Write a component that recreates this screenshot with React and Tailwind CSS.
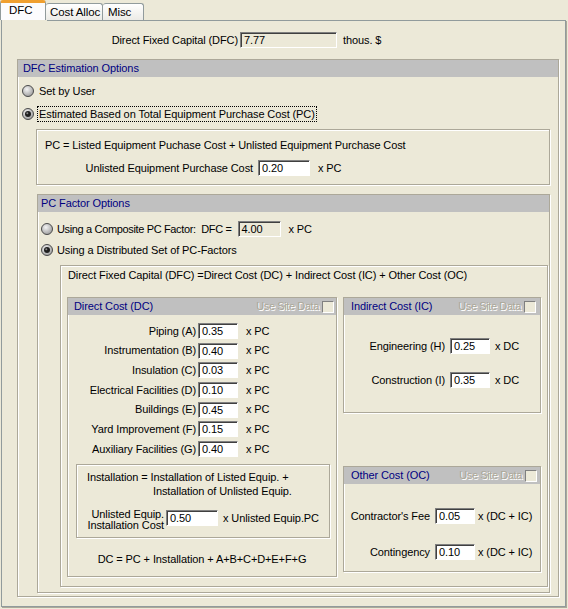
import React from "react";

const etched = "border border-[#aca899] shadow-[inset_1px_1px_0_#ffffff,1px_1px_0_#ffffff]";

function Radio({ checked }) {
  return (
    <svg width="12" height="12" viewBox="0 0 12 12" className="shrink-0">
      <defs>
        <radialGradient id={checked ? "rg1" : "rg0"} cx="0.4" cy="0.35" r="0.7">
          <stop offset="0" stopColor="#f4f4f4" />
          <stop offset="1" stopColor="#9a9a9a" />
        </radialGradient>
      </defs>
      <circle cx="6" cy="6" r="5.5" fill={`url(#${checked ? "rg1" : "rg0"})`} stroke="#4b4b4b" />
      {checked && <circle cx="6" cy="6" r="3" fill="#1e1e1e" />}
      {checked && <circle cx="5.3" cy="5.2" r="1" fill="#8a8a8a" />}
    </svg>
  );
}

function Field({ value, w = "w-[40px]", disabled = false }) {
  return (
    <div
      className={`${w} h-[16px] shrink-0 border border-t-[#808080] border-l-[#808080] border-b-white border-r-white shadow-[inset_1px_1px_0_#404040] pl-[3px] leading-[14px] ${
        disabled ? "bg-[#ece9d8]" : "bg-white"
      }`}
    >
      {value}
    </div>
  );
}

function SiteData() {
  return (
    <div className="flex items-center">
      <span className="text-[#aca899] [text-shadow:1px_1px_0_#ffffff] tracking-[-0.4px]">Use Site Data</span>
      <div className="ml-[3px] w-[12px] h-[12px] border border-t-[#808080] border-l-[#808080] border-b-white border-r-white bg-[#ece9d8]" />
    </div>
  );
}

function Header({ title, pl, site, pr }) {
  return (
    <div className={`h-[17px] bg-[#c0c0c0] flex items-center justify-between ${pl} ${pr}`}>
      <span className="text-[#000080]">{title}</span>
      {site && <SiteData />}
    </div>
  );
}

const directRows = [
  ["Piping (A)", "0.35"],
  ["Instrumentation (B)", "0.40"],
  ["Insulation (C)", "0.03"],
  ["Electrical Facilities (D)", "0.10"],
  ["Buildings (E)", "0.45"],
  ["Yard Improvement (F)", "0.15"],
  ["Auxiliary Facilities (G)", "0.40"],
];

export default function App() {
  return (
    <div className="w-[568px] h-[609px] bg-[#ece9d8] overflow-hidden whitespace-nowrap text-[11px] text-black tracking-[-0.1px] font-['Liberation_Sans',Arial,sans-serif]">
      {/* tabs */}
      <div className="flex items-end h-[20px]">
        <div className="w-[46px] h-[20px] bg-[#fcfcfe] border-x border-[#919b9c] border-t-[3px] border-t-[#f0a030] rounded-t-[3px] text-[11.5px] pl-[8px] leading-[15px]">
          DFC
        </div>
        <div className="w-[57px] h-[17px] bg-gradient-to-b from-white to-[#ecebe6] border-r border-t border-[#919b9c] rounded-t-[3px] pl-[4px] leading-[17px] text-[11.5px]">
          Cost Alloc
        </div>
        <div className="w-[41px] h-[17px] bg-gradient-to-b from-white to-[#ecebe6] border-r border-t border-[#919b9c] rounded-t-[3px] pl-[5px] leading-[17px] text-[11.5px]">
          Misc
        </div>
      </div>

      {/* page */}
      <div className="ml-[1px] w-[565px] h-[587px] border border-t-0 border-[#919b9c] shadow-[1px_1px_0_#aca899] relative">
        <div className="absolute left-[45px] right-0 top-0 border-t border-[#919b9c]" />
        <div className="pt-[12px]">
          <div className="flex items-center h-[16px]">
            <span className="w-[236px] text-right">Direct Fixed Capital (DFC)</span>
            <div className="ml-[2px]">
              <Field value="7.77" w="w-[97px]" disabled />
            </div>
            <span className="ml-[6px]">thous. $</span>
          </div>

          {/* DFC Estimation Options */}
          <div className={`mt-[11px] ml-[15px] w-[542px] h-[538px] ${etched}`}>
            <Header title="DFC Estimation Options" pl="pl-[5px]" />
            <div className="mt-[6px] h-[16px] flex items-center pl-[4px]">
              <Radio />
              <span className="ml-[5px]">Set by User</span>
            </div>
            <div className="mt-[7px] h-[16px] flex items-center pl-[4px]">
              <Radio checked />
              <span className="ml-[3px] px-[1px] border border-dotted border-black leading-[14px]">
                Estimated Based on Total Equipment Purchase Cost (PC)
              </span>
            </div>

            <div className={`mt-[7px] ml-[18px] w-[514px] h-[56px] ${etched}`}>
              <div className="mt-[8px] pl-[8px] leading-[14px]">
                PC = Listed Equipment Puchase Cost + Unlisted Equipment Purchase Cost
              </div>
              <div className="mt-[8px] h-[16px] flex items-center">
                <span className="w-[216px] text-right">Unlisted Equipment Purchase Cost</span>
                <div className="ml-[5px]">
                  <Field value="0.20" w="w-[52px]" />
                </div>
                <span className="ml-[8px]">x PC</span>
              </div>
            </div>

            {/* PC Factor Options */}
            <div className={`mt-[9px] ml-[19px] w-[513px] h-[399px] ${etched}`}>
              <Header title="PC Factor Options" pl="pl-[3px]" />
              <div className="mt-[9px] h-[16px] flex items-center pl-[3px]">
                <Radio />
                <span className="ml-[4px] tracking-[-0.35px]">Using a Composite PC Factor:&nbsp; DFC =</span>
                <div className="ml-[6px]">
                  <Field value="4.00" w="w-[43px]" disabled />
                </div>
                <span className="ml-[8px]">x PC</span>
              </div>
              <div className="mt-[5px] h-[16px] flex items-center pl-[3px]">
                <Radio checked />
                <span className="ml-[4px]">Using a Distributed Set of PC-Factors</span>
              </div>

              {/* Distributed */}
              <div className={`mt-[7px] ml-[22px] w-[488px] h-[322px] ${etched}`}>
                <div className="mt-[2px] pl-[7px] leading-[14px]">
                  Direct Fixed Capital (DFC) =Direct Cost (DC) + Indirect Cost (IC) + Other Cost (OC)
                </div>
                <div className="mt-[15px] pl-[6px] flex items-start">
                  {/* Direct Cost */}
                  <div className={`w-[270px] h-[280px] ${etched}`}>
                    <Header title="Direct Cost (DC)" pl="pl-[6px]" pr="pr-[2px]" site />
                    <div className="mt-[8px] flex flex-col gap-[3.67px]">
                      {directRows.map(([label, v]) => (
                        <div key={label} className="h-[16px] flex items-center">
                          <span className="w-[128px] text-right">{label}</span>
                          <div className="ml-[2px]">
                            <Field value={v} />
                          </div>
                          <span className="ml-[8px]">x PC</span>
                        </div>
                      ))}
                    </div>
                    <div className={`mt-[7px] ml-[8px] w-[254px] h-[74px] ${etched}`}>
                      <div className="mt-[5px] pl-[10px] leading-[14px]">
                        Installation = Installation of Listed Equip. +
                      </div>
                      <div className="pl-[76px] leading-[14px]">Installation of Unlisted Equip.</div>
                      <div className="mt-[12px] flex items-start">
                        <div className="w-[87px] text-right leading-[11.5px] -mt-[1px]">
                          <div>Unlisted Equip.</div>
                          <div>Installation Cost</div>
                        </div>
                        <div className="ml-[2px]">
                          <Field value="0.50" w="w-[52px]" />
                        </div>
                        <span className="ml-[5px] leading-[16px]">x Unlisted Equip.PC</span>
                      </div>
                    </div>
                    <div className="mt-[14px] leading-[14px] text-center">
                      DC = PC + Installation + A+B+C+D+E+F+G
                    </div>
                  </div>

                  {/* right column */}
                  <div className="ml-[6px] w-[198px]">
                    <div className={`h-[116px] ${etched}`}>
                      <Header title="Indirect Cost (IC)" pl="pl-[7px]" pr="pr-[4px]" site />
                      <div className="mt-[23px] h-[16px] flex items-center">
                        <span className="w-[101px] text-right">Engineering (H)</span>
                        <div className="ml-[5px]">
                          <Field value="0.25" />
                        </div>
                        <span className="ml-[5px]">x DC</span>
                      </div>
                      <div className="mt-[18px] h-[16px] flex items-center">
                        <span className="w-[101px] text-right">Construction (I)</span>
                        <div className="ml-[5px]">
                          <Field value="0.35" />
                        </div>
                        <span className="ml-[5px]">x DC</span>
                      </div>
                    </div>

                    <div className={`mt-[53px] h-[106px] ${etched}`}>
                      <Header title="Other Cost (OC)" pl="pl-[7px]" pr="pr-[3px]" site />
                      <div className="mt-[24px] h-[16px] flex items-center">
                        <span className="w-[86px] text-right">Contractor's Fee</span>
                        <div className="ml-[5px]">
                          <Field value="0.05" />
                        </div>
                        <span className="ml-[3px]">x (DC + IC)</span>
                      </div>
                      <div className="mt-[20px] h-[16px] flex items-center">
                        <span className="w-[86px] text-right">Contingency</span>
                        <div className="ml-[5px]">
                          <Field value="0.10" />
                        </div>
                        <span className="ml-[3px]">x (DC + IC)</span>
                      </div>
                    </div>
                  </div>
                </div>
              </div>
            </div>
          </div>
        </div>
      </div>
    </div>
  );
}
